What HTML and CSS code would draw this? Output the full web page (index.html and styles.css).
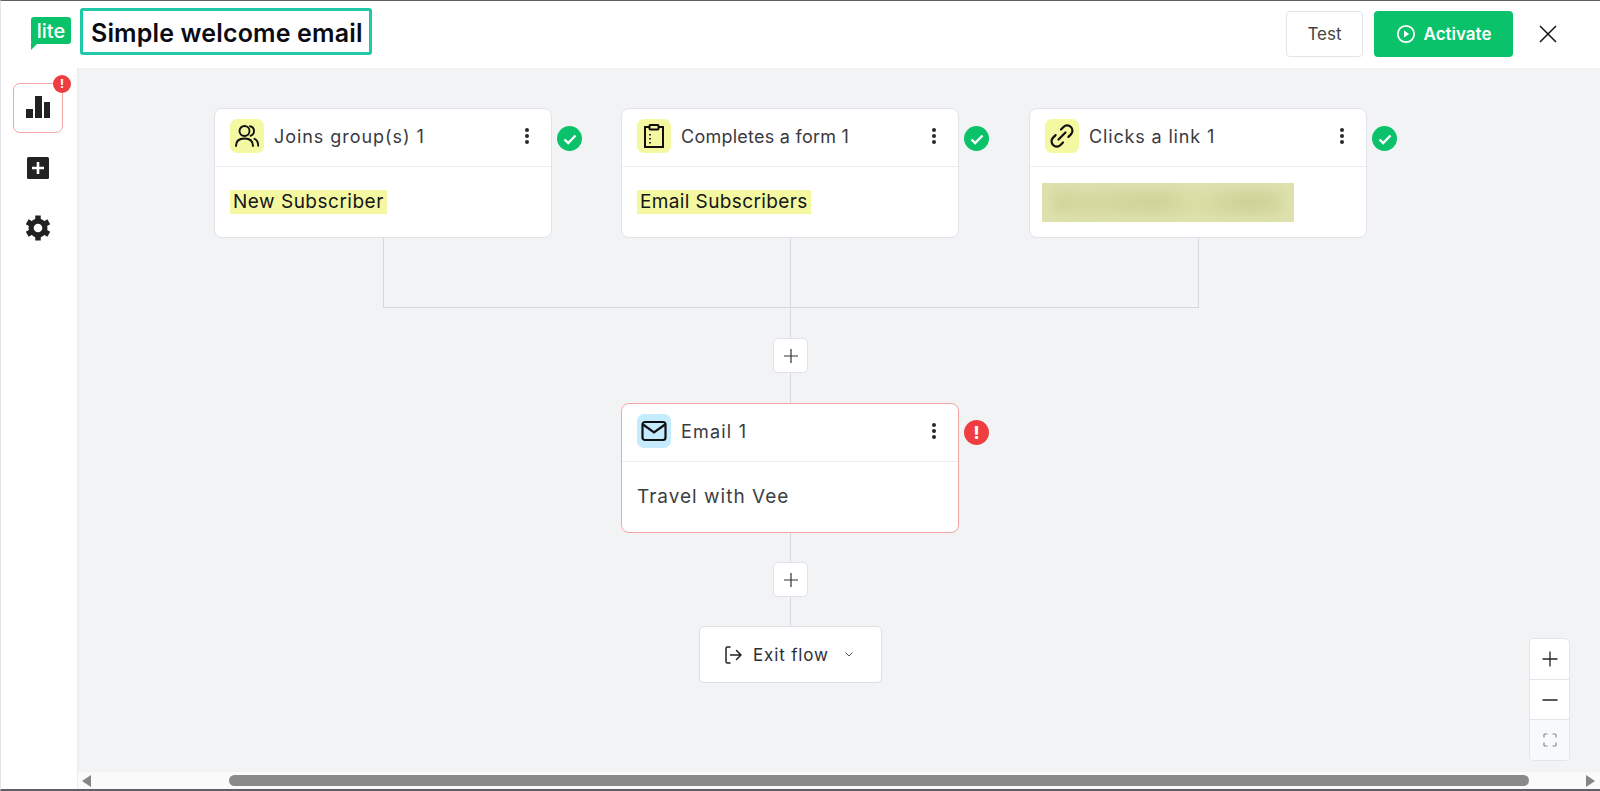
FILE: index.html
```html
<!DOCTYPE html>
<html>
<head>
	<meta charset="UTF-8">
	<title>Simple welcome email</title>
	<link rel="stylesheet" href="styles.css">
</head>
<body>
<div class="CLS_Page">

	<div class="CLS_Header">
		<div class="CLS_Logo">lite</div>
		<div class="CLS_Title">Simple welcome email</div>
		<div class="CLS_Spacer"></div>
		<a class="CLS_BtnTest">Test</a>
		<a class="CLS_BtnActivate">
			<svg width="20" height="20" viewBox="0 0 20 20"><circle cx="10" cy="10" r="8.2" fill="none" stroke="#fff" stroke-width="1.8"/><path d="M8 6.6v6.8l5.2-3.4z" fill="#fff"/></svg>
			Activate
		</a>
		<a class="CLS_BtnClose">
			<svg width="18" height="18" viewBox="0 0 18 18"><path d="M1 1l16 16M17 1L1 17" stroke="#111" stroke-width="1.5" fill="none"/></svg>
		</a>
	</div>

	<div class="CLS_Main">
		<div class="CLS_Side">
			<div class="CLS_SideStats">
				<svg width="26" height="24" viewBox="0 0 26 24"><path d="M1 13h7v9H1zM10 0h7v22h-7zM19 6h6v16h-6z" fill="#222"/></svg>
				<span class="CLS_SideBadge">!</span>
			</div>
			<div class="CLS_SideItem">
				<svg width="24" height="24" viewBox="0 0 24 24"><rect x="1" y="1" width="22" height="22" rx="1.5" fill="#222"/><path d="M12 6v12M6 12h12" stroke="#fff" stroke-width="2.6"/></svg>
			</div>
			<div class="CLS_SideItem CLS_SideGear">
				<svg width="26" height="28" viewBox="0 0 26 28"><circle cx="13" cy="14" r="9.500" fill="#222"/><path d="M13 1.500v25M2.200 7.750l21.600 12.500M23.800 7.750L2.200 20.250" stroke="#222" stroke-width="5.500"/><circle cx="13" cy="14" r="4.300" fill="#fff"/></svg>
			</div>
		</div>

		<div class="CLS_CanvasWrap">
			<div class="CLS_Canvas">
				<div class="CLS_Line CLS_LineA"></div>
				<div class="CLS_Line CLS_LineB"></div>
				<div class="CLS_Line CLS_LineC"></div>
				<div class="CLS_Line CLS_LineH"></div>
				<div class="CLS_Line CLS_LineD"></div>

				<div class="CLS_Node CLS_Node1">
					<div class="CLS_NodeHead">
						<span class="CLS_Tile">
							<svg width="26" height="26" viewBox="0 0 26 26" fill="none" stroke="#111" stroke-width="1.900" stroke-linecap="round"><circle cx="10.500" cy="8" r="5"/><path d="M2 23c0-5 3.500-7.500 8.500-7.500S19 18 19 23M16 3.200c2.800.6 4 2.700 4 4.800s-1.200 4-3.500 4.800M20.500 15.800c2.500 1 3.700 3.600 3.700 7"/></svg>
						</span>
						<span class="CLS_NodeName CLS_NameJoins">Joins group(s) 1</span>
						<span class="CLS_Kebab"><i></i><i></i><i></i></span>
					</div>
					<div class="CLS_NodeBody"><span class="CLS_Mark">New Subscriber</span></div>
					<span class="CLS_Status CLS_StatusOk"><svg width="16" height="16" viewBox="0 0 16 16"><path d="M2.500 8.500l3.700 3.500 7.300-7.500" fill="none" stroke="#fff" stroke-width="2.400"/></svg></span>
				</div>

				<div class="CLS_Node CLS_Node2">
					<div class="CLS_NodeHead">
						<span class="CLS_Tile">
							<svg width="26" height="26" viewBox="0 0 26 26" fill="none" stroke="#111" stroke-width="2"><path d="M8.500 4H4v20h18V4h-4.500"/><rect x="8.500" y="2" width="9" height="4.500" rx=".8"/><path d="M9 11v1.600M9 15v1.600M9 19v1.600" stroke-width="1.700"/></svg>
						</span>
						<span class="CLS_NodeName">Completes a form 1</span>
						<span class="CLS_Kebab"><i></i><i></i><i></i></span>
					</div>
					<div class="CLS_NodeBody"><span class="CLS_Mark CLS_MarkTight">Email Subscribers</span></div>
					<span class="CLS_Status CLS_StatusOk"><svg width="16" height="16" viewBox="0 0 16 16"><path d="M2.500 8.500l3.700 3.500 7.300-7.500" fill="none" stroke="#fff" stroke-width="2.400"/></svg></span>
				</div>

				<div class="CLS_Node CLS_Node3">
					<div class="CLS_NodeHead">
						<span class="CLS_Tile">
							<svg width="26" height="26" viewBox="0 0 26 26" fill="none" stroke="#111" stroke-width="2.200" stroke-linecap="round"><path d="M12 6.500l2.500-2.500a5.200 5.200 0 0 1 7.400 7.400l-2.500 2.500M14 19.500L11.500 22a5.200 5.200 0 0 1-7.400-7.400l2.500-2.500M9.500 16.500l7-7"/></svg>
						</span>
						<span class="CLS_NodeName CLS_NameClicks">Clicks a link 1</span>
						<span class="CLS_Kebab"><i></i><i></i><i></i></span>
					</div>
					<div class="CLS_NodeBody CLS_NodeBodyBlur">
						<div class="CLS_Blur"><div class="CLS_BlurInner"></div></div>
					</div>
					<span class="CLS_Status CLS_StatusOk"><svg width="16" height="16" viewBox="0 0 16 16"><path d="M2.500 8.500l3.700 3.500 7.300-7.500" fill="none" stroke="#fff" stroke-width="2.400"/></svg></span>
				</div>

				<a class="CLS_Add CLS_Add1"><svg width="14" height="14" viewBox="0 0 14 14"><path d="M7 0v14M0 7h14" stroke="#333" stroke-width="1.200"/></svg></a>

				<div class="CLS_Node CLS_Node4 CLS_NodeError">
					<div class="CLS_NodeHead">
						<span class="CLS_Tile CLS_TileBlue">
							<svg width="26" height="26" viewBox="0 0 26 26" fill="none" stroke="#111" stroke-width="2.200"><rect x="1.500" y="4" width="23" height="18" rx="2.500"/><path d="M2 6.500l11 8 11-8"/></svg>
						</span>
						<span class="CLS_NodeName CLS_NameEmail">Email 1</span>
						<span class="CLS_Kebab"><i></i><i></i><i></i></span>
					</div>
					<div class="CLS_NodeBody"><span class="CLS_Plain">Travel with Vee</span></div>
					<span class="CLS_Status CLS_StatusErr">!</span>
				</div>

				<a class="CLS_Add CLS_Add2"><svg width="14" height="14" viewBox="0 0 14 14"><path d="M7 0v14M0 7h14" stroke="#333" stroke-width="1.200"/></svg></a>

				<div class="CLS_Exit">
					<svg width="20" height="20" viewBox="0 0 20 20" fill="none" stroke="#222" stroke-width="1.500" stroke-linecap="round" stroke-linejoin="round"><path d="M7 2H4.500C3.500 2 3 2.500 3 3.500v13c0 1 .5 1.500 1.500 1.500H7M7.500 10H18M13.500 5.500L18 10l-4.500 4.500"/></svg>
					<span class="CLS_ExitText">Exit flow</span>
					<svg class="CLS_ExitCaret" width="8" height="5" viewBox="0 0 8 5"><path d="M.5.5L4 4 7.500.5" fill="none" stroke="#555" stroke-width="1"/></svg>
				</div>

				<div class="CLS_Zoom">
					<a class="CLS_ZoomBtn"><svg width="16" height="16" viewBox="0 0 16 16"><path d="M8 .5v15M.5 8h15" stroke="#222" stroke-width="1.300"/></svg></a>
					<a class="CLS_ZoomBtn"><svg width="16" height="16" viewBox="0 0 16 16"><path d="M.5 8h15" stroke="#222" stroke-width="1.300"/></svg></a>
					<a class="CLS_ZoomBtn CLS_ZoomFit"><svg width="14" height="14" viewBox="0 0 14 14"><path d="M1 4.500V2q0-1 1-1h2.500M9.500 1H12q1 0 1 1v2.500M13 9.500V12q0 1-1 1H9.500M4.500 13H2q-1 0-1-1V9.500" fill="none" stroke="#888" stroke-width="1.200"/></svg></a>
				</div>
			</div>

			<div class="CLS_Scroll">
				<span class="CLS_ScrollArrow CLS_ScrollLeft"></span>
				<span class="CLS_ScrollThumb"></span>
				<span class="CLS_ScrollArrow CLS_ScrollRight"></span>
			</div>
		</div>
	</div>

</div>
</body>
</html>
```

FILE: styles.css
```css
* {
	box-sizing: border-box;
}

html, body {
	margin: 0;
	height: 100%;
	overflow: hidden;
}

body {
	font-family: Inter, "Liberation Sans", Sans-Serif;
	color: #333333;
	background: #FFFFFF;
}

svg {
	display: block;
}

.CLS_Page {
	height: 791px;
	display: flex;
	flex-direction: column;
	border-top: 1px solid #5F6066;
	border-bottom: 2px solid #5F6066;
	border-left: 1px solid #E4E5EA;
}

/* top bar */

.CLS_Header {
	height: 67px;
	flex: none;
	display: flex;
	align-items: center;
	padding-left: 30px;
}

.CLS_Logo {
	position: relative;
	width: 40px;
	height: 27px;
	margin-top: -9px;
	background: #09C269;
	border-radius: 3px;
	color: #FFFFFF;
	font-size: 20px;
	font-weight: 500;
	line-height: 29px;
	text-align: center;
}

.CLS_Logo::after {
	content: '';
	position: absolute;
	left: 0;
	top: 26px;
	border-top: 7px solid #09C269;
	border-right: 7px solid transparent;
}

.CLS_Title {
	margin-left: 9px;
	height: 47px;
	width: 292px;
	margin-top: -6px;
	border: 3px solid #1FC8A6;
	border-radius: 3px;
	padding-left: 8px;
	font-size: 25px;
	font-weight: 600;
	letter-spacing: 0.15px;
	line-height: 45px;
	color: #0B0B14;
	white-space: nowrap;
}

.CLS_Spacer {
	flex: 1;
}

.CLS_BtnTest, .CLS_BtnActivate {
	height: 46px;
	margin-top: -2px;
	border-radius: 4px;
	font-size: 17px;
	display: flex;
	align-items: center;
	justify-content: center;
}

.CLS_BtnTest {
	width: 77px;
	border: 1px solid #E3E4E9;
	color: #444444;
}

.CLS_BtnActivate {
	width: 139px;
	margin-left: 11px;
	gap: 8px;
	background: #09C269;
	color: #FFFFFF;
	font-weight: 600;
}

.CLS_BtnClose {
	margin: -2px 43px 0 26px;
}

/* left rail */

.CLS_Main {
	flex: 1;
	display: flex;
	min-height: 0;
}

.CLS_Side {
	width: 77px;
	flex: none;
	border-right: 1px solid #ECEDF1;
	display: flex;
	flex-direction: column;
	align-items: center;
	padding: 15px 2px 0 0;
}

.CLS_SideStats {
	position: relative;
	width: 50px;
	height: 50px;
	border: 1px solid #F7A5A5;
	border-radius: 7px;
	display: flex;
	align-items: center;
	justify-content: center;
}

.CLS_SideBadge {
	position: absolute;
	right: -9px;
	top: -9px;
	width: 18px;
	height: 18px;
	border-radius: 50%;
	background: #EF3E42;
	color: #FFFFFF;
	font-size: 12px;
	font-weight: 700;
	line-height: 18px;
	text-align: center;
}

.CLS_SideItem {
	margin-top: 17px;
	height: 36px;
	display: flex;
	align-items: center;
	justify-content: center;
}

.CLS_SideGear {
	margin-top: 24px;
}

/* canvas */

.CLS_CanvasWrap {
	flex: 1;
	min-width: 0;
	display: flex;
	flex-direction: column;
}

.CLS_Canvas {
	position: relative;
	flex: 1;
	background: #F2F3F5;
	overflow: hidden;
}

.CLS_Line {
	position: absolute;
	background: #D5D8E0;
}

.CLS_LineA {
	left: 305px;
	top: 169px;
	width: 1px;
	height: 71px;
}

.CLS_LineB {
	left: 712px;
	top: 169px;
	width: 1px;
	height: 389px;
}

.CLS_LineC {
	left: 1120px;
	top: 169px;
	width: 1px;
	height: 71px;
}

.CLS_LineH {
	left: 305px;
	top: 239px;
	width: 816px;
	height: 1px;
}

.CLS_LineD {
	left: 712px;
	top: 463px;
	width: 1px;
	height: 96px;
}

.CLS_Node {
	position: absolute;
	width: 338px;
	height: 130px;
	background: #FFFFFF;
	border: 1px solid #E1E3E9;
	border-radius: 8px;
}

.CLS_Node1 {
	left: 136px;
	top: 40px;
}

.CLS_Node2 {
	left: 543px;
	top: 40px;
}

.CLS_Node3 {
	left: 951px;
	top: 40px;
}

.CLS_Node4 {
	left: 543px;
	top: 335px;
}

.CLS_NodeError {
	border-color: #F5A3A3;
}

.CLS_NodeHead {
	height: 58px;
	padding: 0 18px 3px 15px;
	border-bottom: 1px solid #ECEDF1;
	display: flex;
	align-items: center;
}

.CLS_Tile {
	width: 34px;
	height: 34px;
	flex: none;
	border-radius: 7px;
	background: #F4F8A0;
	display: flex;
	align-items: center;
	justify-content: center;
}

.CLS_TileBlue {
	background: #C5EBFF;
}

.CLS_NodeName {
	flex: 1;
	margin-left: 10px;
	font-size: 18px;
	letter-spacing: 0.25px;
	color: #3A3A3F;
}

.CLS_NameJoins {
	letter-spacing: 0.95px;
}

.CLS_NameClicks {
	letter-spacing: 0.85px;
}

.CLS_NameEmail {
	letter-spacing: 1.2px;
}

.CLS_Kebab {
	display: flex;
	flex-direction: column;
	gap: 2px;
	width: 12px;
	align-items: center;
}

.CLS_Kebab i {
	width: 4px;
	height: 4px;
	border-radius: 50%;
	background: #2A2A2E;
}

.CLS_NodeBody {
	height: 70px;
	padding: 0 15px 1px;
	display: flex;
	align-items: center;
	font-size: 19px;
	letter-spacing: 0.5px;
}

.CLS_NodeBodyBlur {
	padding: 16px 0 0 12px;
	align-items: flex-start;
}

.CLS_Mark {
	background: #F4F8A0;
	color: #15151A;
	line-height: 24px;
	padding: 0 3px;
}

.CLS_MarkTight {
	letter-spacing: 0.38px;
}

.CLS_Plain {
	color: #3E3E42;
	letter-spacing: 1px;
}

.CLS_Blur {
	width: 252px;
	height: 39px;
	background: #DFE2AF;
	overflow: hidden;
	padding: 8px 10px;
}

.CLS_BlurInner {
	height: 100%;
	background: linear-gradient(90deg, #D1D599 0, #D5D9A0 14%, #D3D79D 30%, #CFD397 45%, #DBDFA6 62%, #CDD195 85%, #D5D9A0 100%);
	filter: blur(6px);
}

.CLS_Status {
	position: absolute;
	left: 342px;
	top: 17px;
	width: 25px;
	height: 25px;
	border-radius: 50%;
	display: flex;
	align-items: center;
	justify-content: center;
	color: #FFFFFF;
	font-size: 17px;
	font-weight: 800;
}

.CLS_StatusOk {
	background: #09C269;
}

.CLS_StatusErr {
	top: 16px;
	background: #EF3E42;
}

.CLS_Add {
	position: absolute;
	left: 695px;
	width: 35px;
	height: 35px;
	background: #FFFFFF;
	border: 1px solid #E1E3E9;
	border-radius: 5px;
	display: flex;
	align-items: center;
	justify-content: center;
}

.CLS_Add1 {
	top: 270px;
}

.CLS_Add2 {
	top: 494px;
}

.CLS_Exit {
	position: absolute;
	left: 621px;
	top: 558px;
	width: 183px;
	height: 57px;
	background: #FFFFFF;
	border: 1px solid #DDDFE5;
	border-radius: 5px;
	display: flex;
	align-items: center;
	padding-left: 23px;
}

.CLS_ExitText {
	margin-left: 10px;
	font-size: 17px;
	letter-spacing: 0.85px;
	color: #2E2E33;
}

.CLS_ExitCaret {
	margin-left: 16px;
}

.CLS_Zoom {
	position: absolute;
	right: 30px;
	top: 570px;
	width: 41px;
	height: 123px;
	background: #FFFFFF;
	border: 1px solid #E4E5EA;
	border-radius: 5px;
	display: flex;
	flex-direction: column;
	overflow: hidden;
}

.CLS_ZoomBtn {
	flex: 1;
	display: flex;
	align-items: center;
	justify-content: center;
	border-bottom: 1px solid #E4E5EA;
}

.CLS_ZoomFit {
	border-bottom: none;
	background: #F8F9FB;
}

/* bottom scrollbar */

.CLS_Scroll {
	height: 17px;
	flex: none;
	background: #FAFAFA;
	display: flex;
	align-items: center;
	padding-left: 4px;
}

.CLS_ScrollArrow {
	width: 0;
	height: 0;
	border-top: 6px solid transparent;
	border-bottom: 6px solid transparent;
}

.CLS_ScrollLeft {
	border-right: 9px solid #858585;
}

.CLS_ScrollRight {
	border-left: 9px solid #858585;
}

.CLS_ScrollThumb {
	width: 1300px;
	height: 11px;
	margin: 0 57px 0 138px;
	border-radius: 6px;
	background: #8A8A8A;
}
```
